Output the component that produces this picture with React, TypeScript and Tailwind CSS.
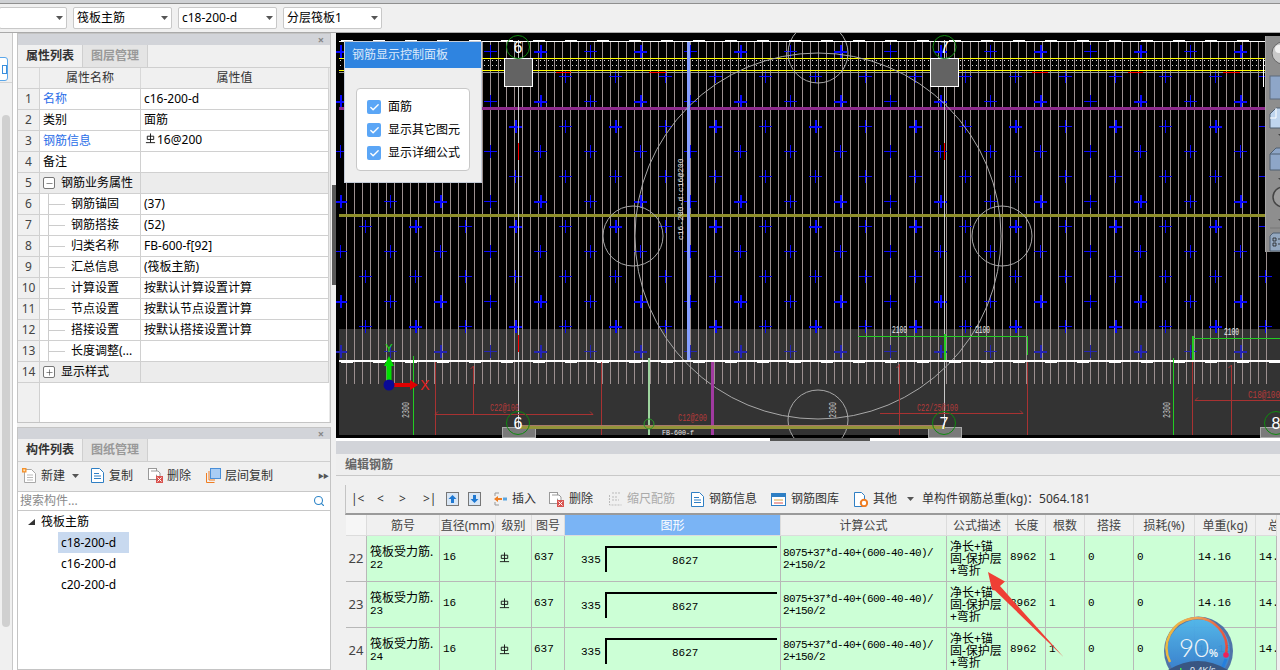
import React from "react";
import { Check, Search, Minus, Plus } from "lucide-react";

const FONT = { fontFamily: '"Noto Sans", "Noto Sans CJK SC", sans-serif' };

function Caret({ color = "#555" }: { color?: string }) {
  return (
    <svg width="7" height="4" viewBox="0 0 7 4" className="shrink-0">
      <path d="M0 0h7L3.5 4z" fill={color} />
    </svg>
  );
}

function TopSelect({ text, cls }: { text: string; cls: string }) {
  return (
    <div className={`h-[22px] bg-white border border-[#c8c8c8] rounded-[2px] flex items-center justify-between pl-[3px] pr-[3px] text-[12px] text-black ${cls}`}>
      <span>{text}</span>
      <Caret />
    </div>
  );
}

function TopBar() {
  return (
    <div className="h-[33px] shrink-0 flex flex-col bg-[#f0f0f0] border-b border-[#aaaaaa]">
      <div className="h-[3px] bg-[#cfd1d4] shrink-0" />
      <div className="h-px bg-[#8f8f8f] shrink-0" />
      <div className="flex items-center gap-[6px] pt-[3px]">
        <TopSelect text="" cls="w-[68px] -ml-px" />
        <TopSelect text="筏板主筋" cls="w-[99px]" />
        <TopSelect text="c18-200-d" cls="w-[99px]" />
        <TopSelect text="分层筏板1" cls="w-[99px]" />
      </div>
    </div>
  );
}

function LeftStrip() {
  return (
    <div className="w-[17px] shrink-0 flex bg-white">
      <div className="w-[13px] bg-[#f0f0f0] border-r border-[#c8c8c8] flex flex-col">
        <div className="h-[50px] border-b border-[#d4d4d4] flex items-start">
          <div className="mt-[24px] w-[9px] h-[24px] -ml-px border border-[#5ba7ea] rounded-r-[3px] bg-white flex flex-col justify-center items-end">
            <div className="w-[5px] h-[9px] border border-[#3b8fdc]" />
          </div>
        </div>
        <div className="mt-[32px] ml-[2px] w-[8px] h-[512px] bg-[#d0d0d0] rounded-[4px]" />
      </div>
    </div>
  );
}

function PanelHeader() {
  return (
    <div className="h-[11px] bg-[#d2d4d9] shrink-0 flex justify-end items-center pr-[6px] text-[#888] text-[11px] font-bold leading-none">×</div>
  );
}

function Tabs({ a, b }: { a: string; b: string }) {
  return (
    <div className="h-[23px] shrink-0 flex bg-[#f0f0f0] border-b border-[#cfcfcf] text-[12px] leading-[21px]">
      <div className="w-[65px] text-center font-semibold text-[#333] border-r border-[#cfcfcf]">{a}</div>
      <div className="w-[65px] text-center font-semibold text-[#999] bg-[#e4e4e4] border-r border-[#cfcfcf]">{b}</div>
    </div>
  );
}

type PropRow = { name: string; value?: React.ReactNode; blue?: boolean; kind?: "group-open" | "group-closed" | "child" };

function RebarMark({ size = 11 }: { size?: number }) {
  return (
    <svg width={size} height={size} viewBox="0 0 12 12" className="inline-block shrink-0" fill="none" stroke="#111" strokeWidth="1">
      <path d="M6 .5V10.5M2.5 3.5h7v3.5h-7zM1 10.5h10" />
    </svg>
  );
}

const PROPS: PropRow[] = [
  { name: "名称", value: "c16-200-d", blue: true },
  { name: "类别", value: "面筋" },
  { name: "钢筋信息", value: <span className="flex items-center gap-px -mt-[3px] ml-[1px]"><span className="-mt-[3px]"><RebarMark /></span>16@200</span>, blue: true },
  { name: "备注" },
  { name: "钢筋业务属性", kind: "group-open" },
  { name: "钢筋锚固", value: "(37)", kind: "child" },
  { name: "钢筋搭接", value: "(52)", kind: "child" },
  { name: "归类名称", value: "FB-600-f[92]", kind: "child" },
  { name: "汇总信息", value: "(筏板主筋)", kind: "child" },
  { name: "计算设置", value: "按默认计算设置计算", kind: "child" },
  { name: "节点设置", value: "按默认节点设置计算", kind: "child" },
  { name: "搭接设置", value: "按默认搭接设置计算", kind: "child" },
  { name: "长度调整(...", kind: "child" },
  { name: "显示样式", kind: "group-closed" },
];

function PropsPanel() {
  return (
    <div className="h-[390px] shrink-0 border border-[#c4c4c4] flex flex-col bg-white">
      <PanelHeader />
      <Tabs a="属性列表" b="图层管理" />
      <div className="flex-1 flex flex-col min-h-0 relative">
        <div className="grid grid-cols-[22px_101px_188px] h-[21px] shrink-0 bg-[#f0f0f0] border-b border-[#d0d0d0] text-[12px] leading-[20px] text-[#333] text-center">
          <div className="border-r border-[#d8d8d8]" />
          <div className="border-r border-[#d8d8d8]">属性名称</div>
          <div className="border-r border-[#d8d8d8]">属性值</div>
        </div>
        {PROPS.map((r, i) => {
          const group = r.kind === "group-open" || r.kind === "group-closed";
          return (
            <div key={i} className="grid grid-cols-[22px_101px_188px] h-[21px] shrink-0 text-[12px] leading-[20px]">
              <div className="bg-[#f0f0f0] border-r border-b border-[#d0d0d0] text-center text-[#444]">{i + 1}</div>
              <div className={`relative border-r border-b border-[#d0d0d0] whitespace-nowrap overflow-hidden ${group ? "bg-[#ececec]" : ""} ${r.blue ? "text-[#2a6ee8]" : "text-black"} ${r.kind === "child" ? "pl-[31px]" : group ? "pl-[21px]" : "pl-[3px]"}`}>
                {r.kind === "child" && (
                  <>
                    <div className="absolute left-[8px] top-0 w-px h-[21px] bg-[#ccc]" />
                    <div className="absolute left-[9px] top-[10px] w-[16px] h-px bg-[#ccc]" />
                  </>
                )}
                {group && (
                  <div className="absolute left-[3px] top-[4px] w-[12px] h-[12px] border border-[#777] rounded-[2px] bg-white flex items-center justify-center">
                    {r.kind === "group-open" ? <Minus size={9} strokeWidth={1.5} color="#333" /> : <Plus size={9} strokeWidth={1.5} color="#333" />}
                  </div>
                )}
                {r.name}
              </div>
              <div className={`border-r border-b border-[#d0d0d0] pl-[3px] text-black flex items-center ${group ? "bg-[#ececec]" : ""}`}>{r.value}</div>
            </div>
          );
        })}
        <div className="flex-1 w-[22px] bg-[#f0f0f0] border-r border-[#d0d0d0]" />
        <div className="absolute right-0 top-0 bottom-0 w-[1px] bg-[#e8e8e8]" />
      </div>
    </div>
  );
}

function IconNew() {
  return (
    <svg width="15" height="16" viewBox="0 0 15 16" fill="none">
      <path d="M2.5 1.5h7l4 4v9h-11z" fill="#fff" stroke="#a9a9a9" />
      <path d="M5 7h6M5 9.5h6M5 12h6" stroke="#bbb" />
      <rect x="0" y="0" width="4.5" height="4.5" fill="#f5912c" />
      <rect x="1.3" y="1.3" width="1.9" height="1.9" fill="#fde3b5" />
    </svg>
  );
}
function IconDoc({ color = "#2f7fc4" }: { color?: string }) {
  return (
    <svg width="13" height="15" viewBox="0 0 13 15" fill="none">
      <path d="M.5.5h8l4 4v10H.5z" fill="#fff" stroke={color} />
      <path d="M3 5.5h5M3 8h7M3 10.5h7" stroke={color} />
    </svg>
  );
}
function IconDelete() {
  return (
    <svg width="15" height="15" viewBox="0 0 15 15" fill="none">
      <rect x="0.5" y="0.5" width="8" height="11" fill="#fff" stroke="#999" />
      <path d="M3 3h7l2 2v4" fill="#fff" stroke="#999" />
      <rect x="8" y="8" width="7" height="7" fill="#d9534f" />
      <path d="M9.5 9.5l4 4M13.5 9.5l-4 4" stroke="#fff" />
    </svg>
  );
}
function IconLayerCopy() {
  return (
    <svg width="15" height="15" viewBox="0 0 15 15" fill="none">
      <path d="M.5 14.5V5M.5 14.5h8M3 12V3" stroke="#ef7d22" />
      <path d="M3 12h6" stroke="#ef7d22" />
      <rect x="4.5" y="0.5" width="10" height="10" fill="#a9cdf5" stroke="#4a8fd8" />
    </svg>
  );
}

function CompPanel() {
  return (
    <div className="flex-1 min-h-0 border border-[#c4c4c4] flex flex-col bg-white">
      <PanelHeader />
      <Tabs a="构件列表" b="图纸管理" />
      <div className="h-[30px] shrink-0 bg-[#f0f0f0] border-b border-[#c8c8c8] flex items-center text-[12px] text-[#333] pl-[4px] pb-[2px] relative">
        <IconNew />
        <span className="ml-[4px]">新建</span>
        <span className="ml-[7px]"><Caret /></span>
        <span className="ml-[12px]"><IconDoc /></span>
        <span className="ml-[5px]">复制</span>
        <span className="ml-[15px]"><IconDelete /></span>
        <span className="ml-[4px]">删除</span>
        <span className="ml-[15px]"><IconLayerCopy /></span>
        <span className="ml-[4px]">层间复制</span>
        <span className="absolute right-[2px] top-[10px] text-[6px] leading-[8px] text-[#555] tracking-[-1px]">▶▶</span>
      </div>
      <div className="h-[19px] shrink-0 border-b border-[#c8c8c8] flex items-center justify-between pl-[2px] pr-[5px] text-[12px] text-[#8a8a8a]">
        <span>搜索构件...</span>
        <Search size={12} color="#2f86c8" strokeWidth={2.2} />
      </div>
      <div className="pt-[1px] text-[12px] text-black">
        <div className="h-[20px] flex items-center pl-[10px]">
          <svg width="7" height="7" viewBox="0 0 7 7"><path d="M7 0v6H0z" fill="#333" /></svg>
          <span className="ml-[6px]">筏板主筋</span>
        </div>
        <div className="ml-[40px] w-[71px] h-[21px] leading-[21px] pl-[3px] bg-[#c8d9ef]">c18-200-d</div>
        <div className="ml-[40px] h-[21px] leading-[21px] pl-[3px]">c16-200-d</div>
        <div className="ml-[40px] h-[21px] leading-[21px] pl-[3px]">c20-200-d</div>
      </div>
    </div>
  );
}

function Cad() {
  const vlines: number[] = [];
  for (let x = 346; x < 1270; x += 8) vlines.push(x);
  const bumps: number[] = [];
  for (let x = 341; x < 1280; x += 32) bumps.push(x);
  const crosses: { x: number; y: number; s: number; w: number; c: string }[] = [];
  for (let r = 0; r <= 12; r++) {
    const y = 51 + r * 25;
    const odd = r % 2 === 1;
    for (let x = odd ? 365 : 340; x < 1280; x += 50) {
      crosses.push({
        x,
        y,
        s: 6.5,
        w: r % 4 === 1 || r === 4 || r === 8 ? 1 : (x / 50) % 2 < 1 ? 2 : 1,
        c: r === 12 ? "#2424b4" : "#0808ff",
      });
    }
  }
  return (
    <svg viewBox="336 33 944 405" width="944" height="405" className="block absolute inset-0" shapeRendering="crispEdges">
      <defs>
        <pattern id="dots" x="339" y="59" width="4" height="5" patternUnits="userSpaceOnUse">
          <rect x="1" y="1" width="1" height="1" fill="#ddd" />
        </pattern>
      </defs>
      <rect x="336" y="33" width="944" height="405" fill="#000" />
      <rect x="339" y="329" width="941" height="106" fill="#333333" />
      <rect x="339" y="59" width="926" height="11" fill="url(#dots)" />
      {vlines.map((x) => (
        <line key={x} x1={x + 0.5} x2={x + 0.5} y1={42} y2={384} stroke="#9c9090" />
      ))}
      {crosses.map((c, i) => (
        <path
          key={i}
          stroke={c.c}
          strokeWidth={c.w}
          d={`M${c.x - c.s} ${c.y + 0.5}H${c.x + c.s}M${c.x + 0.5} ${c.y - c.s}V${c.y + c.s}`}
        />
      ))}
      <rect x="339" y="58" width="926" height="1" fill="#ffff00" />
      <rect x="339" y="70" width="926" height="1" fill="#ffff00" />
      <rect x="339" y="72" width="926" height="1" fill="#999" />
      {[[556, 15], [649, 17], [1032, 16], [1128, 15], [1223, 17]].map(([x, w]) => (
        <rect key={x} x={x} y={72} width={w} height={1} fill="#ff0000" />
      ))}
      <rect x="339" y="107" width="926" height="3" fill="#8c2a8c" />
      <rect x="339" y="214" width="926" height="3" fill="#8f8f2a" />
      <rect x="687" y="42" width="3" height="320" fill="#86a0ff" />
      <rect x="518" y="40" width="1" height="395" fill="#c8c8c8" />
      <rect x="944" y="40" width="1" height="395" fill="#c8c8c8" />
      <rect x="518" y="143" width="1" height="17" fill="#ff0000" />
      <rect x="944" y="143" width="1" height="17" fill="#ff0000" />
      <rect x="518" y="335" width="1" height="17" fill="#ff0000" />

      <g shapeRendering="auto" fill="none" stroke="#a8a8a8" strokeWidth="1">
        <circle cx="818" cy="236" r="183" />
        <circle cx="633" cy="236" r="30" />
        <circle cx="1002" cy="236" r="30" />
        <circle cx="818" cy="53" r="30" />
        <circle cx="818" cy="420" r="30" />
      </g>
      <text x="0" y="0" transform="translate(683 240) rotate(-90)" fill="#e8e8e8" fontSize="8" fontFamily="Liberation Mono" shapeRendering="auto">c16-200-d:c16@200</text>

      <rect x="339" y="360" width="941" height="2" fill="#fff" />
      {bumps.map((x) => (
        <g key={x}>
          <rect x={x} y={362} width={12} height={1} fill="#fff" />
          <rect x={x} y={40} width={12} height={1} fill="#fff" />
        </g>
      ))}
      <rect x="339" y="41" width="926" height="1" fill="#fff" />

      {/* grey column heads */}
      {[505, 931].map((x) => (
        <rect key={x} x={x - 0.5} y={58.5} width={28} height={28} fill="#636363" stroke="#fff" />
      ))}
      <path d="M1263 58V87" stroke="#fff" />
      {[502, 928, 1260].map((x) => (
        <rect key={x} x={x + 0.5} y={427.5} width={33} height={10} fill="#7a7a7a" stroke="#aaa" />
      ))}

      {/* rebars + dimensions */}
      <g fill="none" stroke="#a83232">
        <path d="M435.5 362V435M473.5 366V414M601.5 362V435M899.5 364V435M1027.5 362V435M1192.5 362V435M1231.5 365V435" />
        <path d="M435 414.5H593M880 413.5H1023M1195 400.5H1280" />
        <path d="M435 414.5l3 -3M593 414.5l-3 -3M1023 413.5l-3 -3M1195 400.5l3 -3M473.5 366l-3 3M899.5 365l-3 3M1231.5 365l-3 3" shapeRendering="auto" />
      </g>
      <g fill="#b53a3a" fontFamily="Liberation Mono" fontSize="10" shapeRendering="auto">
        <text x="490" y="411" textLength="29" lengthAdjust="spacingAndGlyphs">C22@100</text>
        <text x="678" y="421" textLength="29" lengthAdjust="spacingAndGlyphs">C12@200</text>
        <text x="917" y="411" textLength="41" lengthAdjust="spacingAndGlyphs">C22/25@100</text>
        <text x="1248" y="398" textLength="32" lengthAdjust="spacingAndGlyphs">C18@100</text>
      </g>
      <g fill="none" stroke="#22cc22">
        <path d="M858 336.5H1028M1192 338.5H1280M1027.5 336V355M413.5 356V435M1173.5 358V435" />
        <path d="M944.5 334V360" strokeWidth="2" />
        <path d="M1192.5 336V360" strokeWidth="2" />
      </g>
      <rect x="711" y="362" width="3" height="73" fill="#a03aa0" />
      <rect x="648" y="358" width="2" height="77" fill="#9ed49e" />
      <rect x="520" y="425" width="425" height="1" fill="#a87a6a" />
      <rect x="520" y="426" width="425" height="3" fill="#93933a" />
      <circle cx="649" cy="424" r="5" fill="none" stroke="#2a9a2a" shapeRendering="auto" />
      <g shapeRendering="auto" fontFamily="Liberation Mono" fill="#e8e8e8" fontSize="10">
        <text x="892" y="333" textLength="15" lengthAdjust="spacingAndGlyphs">2100</text>
        <text x="975" y="333" textLength="15" lengthAdjust="spacingAndGlyphs">2100</text>
        <text x="1224" y="335" textLength="15" lengthAdjust="spacingAndGlyphs">2100</text>
        <text x="662" y="435" fontSize="7" textLength="32" lengthAdjust="spacingAndGlyphs">FB-600-f</text>
      </g>
      <g shapeRendering="auto" fontFamily="Liberation Mono" fill="#c4c4c4" fontSize="10">
        <text transform="translate(409 418) rotate(-90)" textLength="16" lengthAdjust="spacingAndGlyphs">2300</text>
        <text transform="translate(836 418) rotate(-90)" textLength="16" lengthAdjust="spacingAndGlyphs">2300</text>
        <text transform="translate(1170 418) rotate(-90)" textLength="16" lengthAdjust="spacingAndGlyphs">2300</text>
      </g>

      {/* axis bubbles */}
      <g shapeRendering="auto">
        {[[518, 47, "6"], [944.5, 47, "7"], [518, 423, "6"], [944, 423, "7"], [1276, 423, "8"]].map(([x, y, t], i) => (
          <g key={i}>
            <circle cx={x as number} cy={y as number} r="11.5" fill="none" stroke="#0f8a0f" />
            <text x={x as number} y={(y as number) + 6} textAnchor="middle" fill="#fff" fontSize="16" fontFamily="Liberation Sans">{t as string}</text>
          </g>
        ))}

        {/* UCS */}
        <path d="M386.5 366h5v14h-5zM389 356l5 10h-10z" fill="#00e000" />
        <path d="M394 383h16v-3l8 5-8 5v-3h-16z" fill="#e00000" />
        <circle cx="389" cy="385" r="5.5" fill="#0a0a96" />
        <text x="389" y="352" textAnchor="middle" fill="#18e018" fontSize="11" fontFamily="Liberation Sans">Y</text>
        <text x="425" y="390" textAnchor="middle" fill="#e82020" fontSize="14" fontFamily="Liberation Sans">X</text>
      </g>
    </svg>
  );
}

function ViewToolbar() {
  return (
    <div className="absolute right-0 top-[3px] w-[15px] h-[216px] bg-[#8e8e8e] border-l border-[#a8a8a8] flex flex-col items-start pl-[3px] overflow-hidden">
      <svg width="16" height="216" viewBox="0 0 16 216" fill="none" className="shrink-0">
        <circle cx="14" cy="17" r="11" fill="#c8c8c8" stroke="#666" />
        <circle cx="10" cy="13" r="4" fill="#f2f2f2" />
        <rect x="1" y="40" width="16" height="23" fill="#8ea6c8" stroke="#5d6b7d" />
        <path d="M1 78l6-6h12v20H1z" fill="#bfd5ee" stroke="#4f5f70" />
        <path d="M7 72v10H1" stroke="#fff" />
        <path d="M9 98l3 3 3-3z" fill="#444" />
        <path d="M1 118l6-6h12v22H1z" fill="#8ea6c8" stroke="#4f5f70" />
        <path d="M1 118h16" stroke="#4f5f70" />
        <path d="M9 142l3 3 3-3z" fill="#444" />
        <circle cx="14" cy="161" r="10" fill="#9c9c9c" stroke="#444" strokeWidth="1.5" />
        <path d="M9 183l3 3 3-3z" fill="#444" />
        <path d="M1 192h15" stroke="#777" />
        <path d="M1 200l3-3h12v18H1z" fill="#94a8c0" stroke="#4f5f70" />
        <path d="M4 202h3v3H4zM4 207h3v3H4zM9 203h6M9 208h6" stroke="#222" strokeWidth="0.8" />
      </svg>
    </div>
  );
}

function ControlPanel() {
  const items = ["面筋", "显示其它图元", "显示详细公式"];
  return (
    <div className="absolute left-[8px] top-[8px] w-[138px] h-[142px] bg-[#eeeeee] border border-[#c4ccd8] flex flex-col">
      <div className="h-[26px] bg-[#2f84e0] text-[#dbe9fa] text-[12px] leading-[26px] pl-[7px] shrink-0">钢筋显示控制面板</div>
      <div className="mx-[11px] mt-[20px] h-[83px] bg-white border border-[#c8c8c8] rounded-[4px] flex flex-col justify-center gap-[9px] pl-[10px] pt-[1px]">
        {items.map((t) => (
          <div key={t} className="h-[14px] flex items-center gap-[7px] text-[12px] text-black">
            <span className="w-[14px] h-[14px] bg-[#5ba6f6] rounded-[2px] flex items-center justify-center">
              <Check size={11} color="#fff" strokeWidth={3} />
            </span>
            {t}
          </div>
        ))}
      </div>
    </div>
  );
}

function ToolBtn({ icon, text, cls = "", disabled = false }: { icon: React.ReactNode; text: string; cls?: string; disabled?: boolean }) {
  return (
    <div className={`flex items-center gap-[5px] ${cls} ${disabled ? "text-[#aaa]" : "text-[#333]"}`}>
      {icon}
      <span>{text}</span>
    </div>
  );
}

function EditToolbar() {
  return (
    <div className="h-[30px] shrink-0 ml-[9px] border-l border-[#c4c4c4] flex items-center text-[12px] text-[#333] border-b-2 border-b-[#9a9a9a] pl-[5px]">
      <span className="w-[26px]">|&lt;</span>
      <span className="w-[22px]">&lt;</span>
      <span className="w-[24px]">&gt;</span>
      <span className="w-[23px]">&gt;|</span>
      <svg width="13" height="14" viewBox="0 0 13 14"><rect x=".5" y=".5" width="12" height="13" fill="#d8e6f5" stroke="#777" /><path d="M6.5 3l4 4H8v4H5V7H2.500z" fill="#1e78d2" /></svg>
      <svg width="13" height="14" viewBox="0 0 13 14" className="ml-[9px]"><rect x=".5" y=".5" width="12" height="13" fill="#d8e6f5" stroke="#777" /><path d="M6.500 11l4-4H8V3H5v4H2.500z" fill="#1e78d2" /></svg>
      <ToolBtn
        cls="ml-[13px]"
        text="插入"
        icon={<svg width="13" height="14" viewBox="0 0 13 14" fill="none"><path d="M1 1h4M1 13h4M1 1v3M1 10v3" stroke="#999" /><path d="M0 7l4-3v2h4v2H4v2z" fill="#ef7d22" /><rect x="9" y="5.500" width="4" height="3" fill="#5aa5e0" /></svg>}
      />
      <ToolBtn cls="ml-[13px]" text="删除" icon={<IconDelete />} />
      <ToolBtn
        cls="ml-[16px]"
        text="缩尺配筋"
        disabled
        icon={<svg width="13" height="14" viewBox="0 0 13 14" fill="none" stroke="#bbb"><path d="M.5 3v10h12M3 1h9M3 5h5M3 8h7" strokeDasharray="2 1" /></svg>}
      />
      <ToolBtn cls="ml-[16px]" text="钢筋信息" icon={<IconDoc />} />
      <ToolBtn
        cls="ml-[14px]"
        text="钢筋图库"
        icon={<svg width="15" height="13" viewBox="0 0 15 13" fill="none"><rect x=".5" y=".5" width="14" height="12" fill="#fff" stroke="#2f7fc4" /><rect x="1" y="1" width="13" height="3" fill="#2f7fc4" /><path d="M3 7h9" stroke="#d9a441" /><path d="M3 10h9" stroke="#d9534f" /></svg>}
      />
      <ToolBtn
        cls="ml-[15px]"
        text="其他"
        icon={<svg width="14" height="15" viewBox="0 0 14 15" fill="none"><path d="M.5.5h7l3 3v11H.5z" fill="#fff" stroke="#2f7fc4" /><circle cx="10" cy="11" r="3.200" fill="#fff" stroke="#ef7d22" strokeWidth="2" /></svg>}
      />
      <span className="ml-[10px]"><Caret /></span>
      <span className="ml-[8px] whitespace-nowrap">单构件钢筋总重(kg)：5064.181</span>
    </div>
  );
}

const GRID = "grid grid-cols-[21px_73px_56px_36px_33px_216px_166px_61px_38px_39px_49px_61px_61px_21px]";
const MONO = { fontFamily: '"Liberation Mono", "Noto Sans CJK SC", monospace' };

function Row({ n }: { n: number }) {
  const cell = "bg-[#ccffd6] border-r border-b border-[#b8b8b8] overflow-hidden whitespace-nowrap text-[11px] text-black flex items-center";
  return (
    <div className={`${GRID} h-[46px] shrink-0`}>
      <div className="bg-[#f0f0f0] border-r border-b border-[#b8b8b8] text-[13px] text-[#444] flex items-center justify-center">{n}</div>
      <div className={`${cell} pl-[3px] text-[12px] leading-[12px]`}>
        <div>筏板受力筋.<br /><span className="text-[11px]" style={MONO}>{n}</span></div>
      </div>
      <div className={`${cell} pl-[3px] pb-[2px]`} style={MONO}>16</div>
      <div className={`${cell} pl-[3px] pb-[2px]`}><RebarMark size={11} /></div>
      <div className={`${cell} pl-[2px] pb-[2px]`} style={MONO}>637</div>
      <div className={`${cell} relative`} style={MONO}>
        <span className="ml-[16px] mt-[4px]">335</span>
        <div className="absolute left-[40px] top-[10px] w-[172px] h-[26px] border-l-2 border-t-2 border-black" />
        <span className="absolute left-[107px] top-[18px] leading-[14px]">8627</span>
      </div>
      <div className={`${cell} pl-[2px] tracking-[-0.6px] leading-[12px]`} style={MONO}>
        <div>8075+37*d-40+(600-40-40)/<br />2+150/2</div>
      </div>
      <div className={`${cell} pl-[3px] text-[12px] leading-[12px]`}>
        <div>净长+锚<br />固-保护层<br />+弯折</div>
      </div>
      <div className={`${cell} pl-[2px] pb-[2px]`} style={MONO}>8962</div>
      <div className={`${cell} pl-[3px] pb-[2px]`} style={MONO}>1</div>
      <div className={`${cell} pl-[3px] pb-[2px]`} style={MONO}>0</div>
      <div className={`${cell} pl-[3px] pb-[2px]`} style={MONO}>0</div>
      <div className={`${cell} pl-[3px] pb-[2px]`} style={MONO}>14.16</div>
      <div className={`${cell} pl-[3px] pb-[2px]`} style={MONO}>14.</div>
    </div>
  );
}

function EditTable() {
  const heads = ["", "筋号", "直径(mm)", "级别", "图号", "图形", "计算公式", "公式描述", "长度", "根数", "搭接", "损耗(%)", "单重(kg)", "总"];
  return (
    <div className="ml-[10px] flex flex-col min-h-0">
      <div className={`${GRID} h-[21px] shrink-0 text-[12px] leading-[21px] text-[#444]`}>
        {heads.map((h, i) => (
          <div key={i} className={`text-center overflow-hidden whitespace-nowrap border-r border-b border-[#dcdcdc] ${h === "图形" ? "bg-[#7ab4f5] text-white" : "bg-[#f0f0f0]"} ${i === 13 ? "text-left pl-[12px]" : ""} ${i === 0 ? "bg-[#f6f6f6]" : ""}`}>{h}</div>
        ))}
      </div>
      <Row n={22} />
      <Row n={23} />
      <Row n={24} />
    </div>
  );
}

function Annotation() {
  return (
    <svg viewBox="0 0 1280 670" width="1280" height="670" className="absolute left-0 top-0 pointer-events-none">
      <path d="M988 572 L1005 581.500 L1000 586 L1063.500 657 L995 590.500 L992 590 Z" fill="#ef3f35" />
      <defs>
        <linearGradient id="gb" x1="0" y1="0" x2="0" y2="1">
          <stop offset="0" stopColor="#4fb4ea" />
          <stop offset="1" stopColor="#2f6ec4" />
        </linearGradient>
        <linearGradient id="ga" x1="0" y1="0" x2="1" y2="0">
          <stop offset="0" stopColor="#eeb83c" />
          <stop offset="0.5" stopColor="#f0a050" />
          <stop offset="1" stopColor="#e84a3a" />
        </linearGradient>
      </defs>
      <g opacity="0.96">
        <circle cx="1198.500" cy="651" r="34.500" fill="#4a6fa8" />
        <circle cx="1198.500" cy="651" r="31.500" fill="url(#gb)" />
        <path d="M1170 662 A30 30 0 1 1 1226 654" fill="none" stroke="url(#ga)" strokeWidth="2.500" />
        <path d="M1226 659 L1222 669" stroke="#1f7ae0" strokeWidth="3" />
        <circle cx="1226" cy="655" r="2.800" fill="#f01858" />
        <path d="M1168 670 Q1198 652 1228 670Z" fill="#34507f" />
        <text x="1179" y="657" fill="#f2f6fb" fontSize="26" fontFamily="Lato, sans-serif" fontWeight="300">90</text>
        <text x="1209" y="657" fill="#f2f6fb" fontSize="10" fontWeight="700" fontFamily="Liberation Sans">%</text>
        <text x="1190" y="673" fill="#e8eef6" fontSize="9" fontFamily="Liberation Sans">0.4K/s</text>
        <rect x="1180" y="668" width="1.500" height="2" fill="#3fe04a" />
      </g>
    </svg>
  );
}

export default function App() {
  return (
    <div style={FONT} className="relative w-[1280px] h-[670px] overflow-hidden flex flex-col bg-[#f0f0f0] text-[12px]">
      <TopBar />
      <div className="flex flex-1 min-h-0">
        <LeftStrip />
        <div className="w-[314px] shrink-0 flex flex-col gap-[4px]">
          <PropsPanel />
          <CompPanel />
        </div>
        <div className="w-[5px] shrink-0 bg-[#f0f0f0] flex flex-col items-end pt-[152px]">
          <div className="w-[4px] h-[100px] bg-[#5a5a5a]" />
        </div>
        <div className="flex-1 min-w-0 flex flex-col">
          <div className="relative h-[405px] shrink-0">
            <Cad />
            <ViewToolbar />
            <ControlPanel />
          </div>
          <div className="h-[16px] shrink-0 flex flex-col bg-[#d2d4d9]">
            <div className="h-[3px] bg-white flex">
              <div className="w-[100px] h-[3px] bg-[#555] ml-[434px]" />
            </div>
          </div>
          <div className="h-[22px] shrink-0 bg-[#eeeeee] border-b border-[#c8c8c8] pl-[9px] text-[12px] leading-[21px] text-[#666] font-semibold">编辑钢筋</div>
          <div className="h-[9px] shrink-0" />
          <EditToolbar />
          <EditTable />
        </div>
      </div>
      <Annotation />
    </div>
  );
}
